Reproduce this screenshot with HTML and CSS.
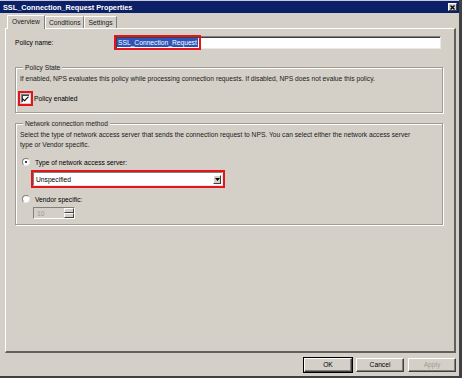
FILE: index.html
```html
<!DOCTYPE html>
<html lang="en">

<head>
    <meta charset="UTF-8">
    <title>SSL_Connection_Request Properties</title>
    <link rel="stylesheet" href="styles.css">
</head>

<body>

    <div class="window">
        <div class="titlebar">
            <span class="title">SSL_Connection_Request Properties</span>
            <span class="close-btn">
                <svg width="5" height="5" viewBox="0 0 5 5"><path d="M0.5 0.5 L4.5 4.5 M4.5 0.5 L0.5 4.5" stroke="#000" stroke-width="1.3"/></svg>
            </span>
        </div>

        <div class="dialog-body">
            <!-- Tabs -->
            <div class="tabs">
                <div class="tab active">Overview</div>
                <div class="tab">Conditions</div>
                <div class="tab">Settings</div>
            </div>

            <div class="panel">
                <div class="name-row">
                    <span class="label">Policy name:</span>
                    <div class="textbox">
                        <span class="selected">SSL_Connection_Request</span>
                    </div>
                </div>

                <div class="group state-group">
                    <div class="group-title">Policy State</div>
                    <p class="desc">If enabled, NPS evaluates this policy while processing connection requests. If disabled, NPS does not evalue this policy.</p>
                    <div class="check-row">
                        <span class="checkbox">
                            <svg width="7" height="7" viewBox="0 0 7 7"><path d="M0.5 3 L2.5 5 L6.5 1 L6.5 2.6 L2.5 6.6 L0.5 4.6 Z" fill="#000"/></svg>
                        </span>
                        <span>Policy enabled</span>
                    </div>
                </div>

                <div class="group method-group">
                    <div class="group-title">Network connection method</div>
                    <p class="desc narrow">Select the type of network access server that sends the connection request to NPS. You can select either the network access server type or Vendor specific.</p>
                    <div class="radio-row">
                        <span class="radio checked"></span>
                        <span>Type of network access server:</span>
                    </div>
                    <div class="dropdown">
                        <span>Unspecified</span>
                        <span class="drop-btn">
                            <svg width="5" height="3" viewBox="0 0 5 3"><path d="M0 0 H5 L2.5 3 Z" fill="#000"/></svg>
                        </span>
                    </div>
                    <div class="radio-row vendor">
                        <span class="radio"></span>
                        <span>Vendor specific:</span>
                    </div>
                    <div class="spinbox">
                        <span class="spin-value">10</span>
                        <span class="spin-btns">
                            <span class="spin-up"></span>
                            <span class="spin-down"></span>
                        </span>
                    </div>
                </div>
            </div>

            <div class="buttons">
                <div class="btn default">OK</div>
                <div class="btn">Cancel</div>
                <div class="btn disabled">Apply</div>
            </div>
        </div>
    </div>

</body>

</html>
```

FILE: styles.css
```css
* {
    box-sizing: border-box;
}

body {
    margin: 0;
    padding: 0;
    font-family: 'Liberation Sans', Arial, sans-serif;
    font-size: 6.7px;
    color: #000;
    background-color: #d4d0c8;
}

.window {
    width: 462px;
    height: 378px;
    background-color: #d4d0c8;
    border-right: 3px solid #404040;
    border-bottom: 2px solid #404040;
    display: flex;
    flex-direction: column;
}

.titlebar {
    height: 13px;
    background-color: #0c2068;
    border-top: 1px solid #c8c8d8;
    display: flex;
    align-items: center;
    justify-content: space-between;
    padding: 0 2px 0 3px;
}

.title {
    color: #fff;
    font-weight: bold;
    font-size: 7.3px;
}

.close-btn {
    width: 9px;
    height: 8px;
    background-color: #d4d0c8;
    border: 1px solid #fff;
    border-right-color: #404040;
    border-bottom-color: #404040;
    display: flex;
    align-items: center;
    justify-content: center;
}

.dialog-body {
    flex: 1;
    display: flex;
    flex-direction: column;
    padding: 2px 3px 0 5px;
}

/* Tab strip */
.tabs {
    display: flex;
    height: 13px;
    padding-left: 2px;
    align-items: flex-end;
}

.tab {
    height: 12px;
    padding: 0 3px;
    line-height: 11px;
    border: 1px solid #fff;
    border-right-color: #808080;
    border-bottom: none;
    color: #202020;
}

.tab.active {
    height: 14px;
    margin-bottom: -1px;
    position: relative;
    z-index: 1;
    background-color: #d4d0c8;
    line-height: 12px;
    padding: 0 4px;
}

/* Tab page */
.panel {
    height: 325px;
    border: 1px solid #fff;
    border-right: 2px solid #606060;
    border-bottom: 2px solid #606060;
    padding: 7px 10px 0 9px;
}

.name-row {
    display: flex;
    align-items: center;
    height: 13px;
}

.label {
    width: 100px;
}

.textbox {
    width: 326px;
    height: 13px;
    background-color: #fff;
    border: 1px solid #808080;
    border-right-color: #e8e8e8;
    border-bottom-color: #e8e8e8;
    box-shadow: inset 1px 1px 0 #404040;
    display: flex;
    align-items: center;
    padding-left: 1px;
}

.selected {
    background-color: #2f54b8;
    color: #fff;
    line-height: 9px;
    padding: 0 1px;
    outline: 2px solid #e3141c;
    outline-offset: 1px;
}

/* Group boxes */
.group {
    width: 428px;
    border: 1px solid #a09c94;
    box-shadow: 1px 1px 0 #fff, inset 1px 1px 0 #fff;
    padding: 0 4px 0 4px;
}

.group-title {
    width: fit-content;
    margin: -5px 0 0 3px;
    padding: 0 2px;
    line-height: 9px;
    background-color: #d4d0c8;
    color: #202020;
}

.state-group {
    margin-top: 18px;
    height: 46px;
}

.method-group {
    margin-top: 10px;
    height: 102px;
}

.desc {
    margin: 2px 0 0 0;
    line-height: 10px;
    color: #202020;
}

.desc.narrow {
    max-width: 400px;
}

.check-row {
    display: flex;
    align-items: center;
    gap: 4px;
    margin-top: 10px;
    padding-left: 1px;
}

.checkbox {
    width: 9px;
    height: 9px;
    background-color: #fff;
    border: 1px solid #808080;
    border-right-color: #fff;
    border-bottom-color: #fff;
    box-shadow: inset 1px 1px 0 #404040;
    display: flex;
    align-items: center;
    justify-content: center;
    outline: 2px solid #e3141c;
    outline-offset: 1px;
}

.radio-row {
    display: flex;
    align-items: center;
    gap: 5px;
    margin-top: 8px;
    padding-left: 2px;
}

.radio-row.vendor {
    margin-top: 9px;
}

.radio {
    width: 8px;
    height: 8px;
    border-radius: 50%;
    background-color: #fff;
    border: 1px solid #808080;
    border-right-color: #e8e8e8;
    border-bottom-color: #e8e8e8;
    display: flex;
    align-items: center;
    justify-content: center;
}

.radio.checked::after {
    content: "";
    width: 2px;
    height: 2px;
    border-radius: 50%;
    background-color: #000;
}

.dropdown {
    width: 190px;
    height: 14px;
    margin: 6px 0 0 13px;
    background-color: #fff;
    border: 1px solid #808080;
    border-right-color: #e8e8e8;
    border-bottom-color: #e8e8e8;
    outline: 2px solid #e3141c;
    outline-offset: 0;
    display: flex;
    align-items: center;
    justify-content: space-between;
    padding: 0 1px 0 2px;
}

.drop-btn {
    width: 8px;
    height: 9px;
    background-color: #d4d0c8;
    border: 1px solid #fff;
    border-right-color: #404040;
    border-bottom-color: #404040;
    display: flex;
    align-items: center;
    justify-content: center;
}

.spinbox {
    width: 42px;
    height: 12px;
    margin: 4px 0 0 13px;
    background-color: #d4d0c8;
    border: 1px solid #808080;
    border-right-color: #fff;
    border-bottom-color: #fff;
    display: flex;
    align-items: center;
    justify-content: space-between;
    padding-left: 3px;
}

.spin-value {
    color: #9a968e;
}

.spin-btns {
    width: 10px;
    height: 10px;
    display: flex;
    flex-direction: column;
}

.spin-up,
.spin-down {
    flex: 1;
    border: 1px solid #fff;
    border-right-color: #404040;
    border-bottom-color: #404040;
}

/* Bottom buttons */
.buttons {
    display: flex;
    justify-content: flex-end;
    gap: 4px;
    margin-top: 5px;
    padding-right: 0;
}

.btn {
    width: 48px;
    height: 14px;
    line-height: 11px;
    text-align: center;
    border: 1px solid #fff;
    border-right-color: #404040;
    border-bottom-color: #404040;
    box-shadow: inset -1px -1px 0 #808080;
}

.btn.default {
    outline: 1px solid #000;
}

.btn.disabled {
    color: #a09c94;
}
```
